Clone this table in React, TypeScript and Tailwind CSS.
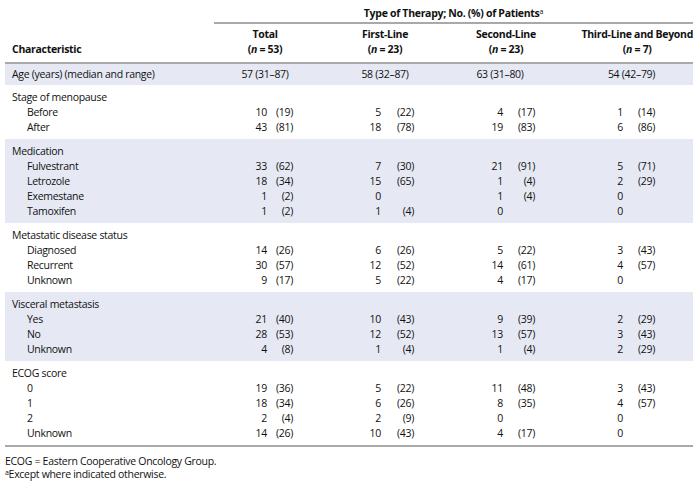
type Cell = [string, string]

interface Section {
  title: string
  shaded: boolean
  rows: [string, Cell, Cell, Cell, Cell][]
}

const sections: Section[] = [
  {
    title: 'Stage of menopause',
    shaded: false,
    rows: [
      ['Before', ['10', '(19)'], ['5', '(22)'], ['4', '(17)'], ['1', '(14)']],
      ['After', ['43', '(81)'], ['18', '(78)'], ['19', '(83)'], ['6', '(86)']]
    ]
  },
  {
    title: 'Medication',
    shaded: true,
    rows: [
      ['Fulvestrant', ['33', '(62)'], ['7', '(30)'], ['21', '(91)'], ['5', '(71)']],
      ['Letrozole', ['18', '(34)'], ['15', '(65)'], ['1', '(4)'], ['2', '(29)']],
      ['Exemestane', ['1', '(2)'], ['0', ''], ['1', '(4)'], ['0', '']],
      ['Tamoxifen', ['1', '(2)'], ['1', '(4)'], ['0', ''], ['0', '']]
    ]
  },
  {
    title: 'Metastatic disease status',
    shaded: false,
    rows: [
      ['Diagnosed', ['14', '(26)'], ['6', '(26)'], ['5', '(22)'], ['3', '(43)']],
      ['Recurrent', ['30', '(57)'], ['12', '(52)'], ['14', '(61)'], ['4', '(57)']],
      ['Unknown', ['9', '(17)'], ['5', '(22)'], ['4', '(17)'], ['0', '']]
    ]
  },
  {
    title: 'Visceral metastasis',
    shaded: true,
    rows: [
      ['Yes', ['21', '(40)'], ['10', '(43)'], ['9', '(39)'], ['2', '(29)']],
      ['No', ['28', '(53)'], ['12', '(52)'], ['13', '(57)'], ['3', '(43)']],
      ['Unknown', ['4', '(8)'], ['1', '(4)'], ['1', '(4)'], ['2', '(29)']]
    ]
  },
  {
    title: 'ECOG score',
    shaded: false,
    rows: [
      ['0', ['19', '(36)'], ['5', '(22)'], ['11', '(48)'], ['3', '(43)']],
      ['1', ['18', '(34)'], ['6', '(26)'], ['8', '(35)'], ['4', '(57)']],
      ['2', ['2', '(4)'], ['2', '(9)'], ['0', ''], ['0', '']],
      ['Unknown', ['14', '(26)'], ['10', '(43)'], ['4', '(17)'], ['0', '']]
    ]
  }
]

// where the count ends and where the percentage ends, per column
const numWidth = ['w-[53px]', 'w-[65px]', 'w-[49px]', 'w-[65px]']
const pctWidth = ['w-[26px]', 'w-[33px]', 'w-[32px]', 'w-[32px]']

const grid = 'grid grid-cols-[209px_102px_138px_104px_135px]'

function Rule({ className = '' }: { className?: string }) {
  return <div className={`h-[2px] bg-[#a9a9a9] ${className}`} />
}

function DataRow({ label, cells }: { label: string; cells: Cell[] }) {
  return (
    <div className={`${grid} h-[15px] items-center`}>
      <div className="pl-[22px]">{label}</div>
      {cells.map(([n, p], i) => (
        <div key={i} className="flex">
          <span className={`${numWidth[i]} text-right`}>{n}</span>
          <span className={`${pctWidth[i]} text-right`}>{p}</span>
        </div>
      ))}
    </div>
  )
}

export default function App() {
  return (
    <div
      className="w-[700px] h-[488px] bg-white text-[#111] text-[10.5px] leading-[15px] tracking-[-0.3px]"
      style={{ fontFamily: '"Open Sans", "Liberation Sans", sans-serif' }}
    >
      <div className="ml-[5px] w-[688px]">
        <div className="pt-[6px] flex">
          <div className="w-[209px]" />
          <div className="flex-1 text-center font-bold">
            Type of Therapy; No. (%) of Patients<sup className="text-[7px] font-normal">a</sup>
          </div>
        </div>
        <Rule className="ml-[209px] mt-[1px]" />

        <div className={`${grid} pt-[3px] pb-[5px] font-bold items-end`}>
          <div className="pl-[7px]">Characteristic</div>
          <div className="text-center">
            <div>Total</div>
            <div>(<i>n</i> = 53)</div>
          </div>
          <div className="text-center">
            <div>First-Line</div>
            <div>(<i>n</i> = 23)</div>
          </div>
          <div className="text-center">
            <div>Second-Line</div>
            <div>(<i>n</i> = 23)</div>
          </div>
          <div className="ml-auto w-fit text-center">
            <div>Third-Line and Beyond</div>
            <div>(<i>n</i> = 7)</div>
          </div>
        </div>
        <Rule />

        <div className={`${grid} h-[21px] items-center bg-[#e6e9f4]`}>
          <div className="pl-[7px]">Age (years) (median and range)</div>
          <div className="text-center">57 (31–87)</div>
          <div className="text-center">58 (32–87)</div>
          <div className="text-center pr-[12px]">63 (31–80)</div>
          <div className="text-center pl-[12px]">54 (42–79)</div>
        </div>

        {sections.map((s) => (
          <div key={s.title} className={`pt-[5px] pb-[4px] ${s.shaded ? 'bg-[#e6e9f4]' : ''}`}>
            <div className="h-[15px] pl-[7px]">{s.title}</div>
            {s.rows.map(([label, ...cells]) => (
              <DataRow key={label} label={label} cells={cells} />
            ))}
          </div>
        ))}
        <Rule />

        <div className="pt-[8px]">
          <div className="h-[13px] leading-[13px]">ECOG = Eastern Cooperative Oncology Group.</div>
          <div className="h-[13px] leading-[13px]">
            <sup className="text-[7px]">a</sup>Except where indicated otherwise.
          </div>
        </div>
      </div>
    </div>
  )
}
